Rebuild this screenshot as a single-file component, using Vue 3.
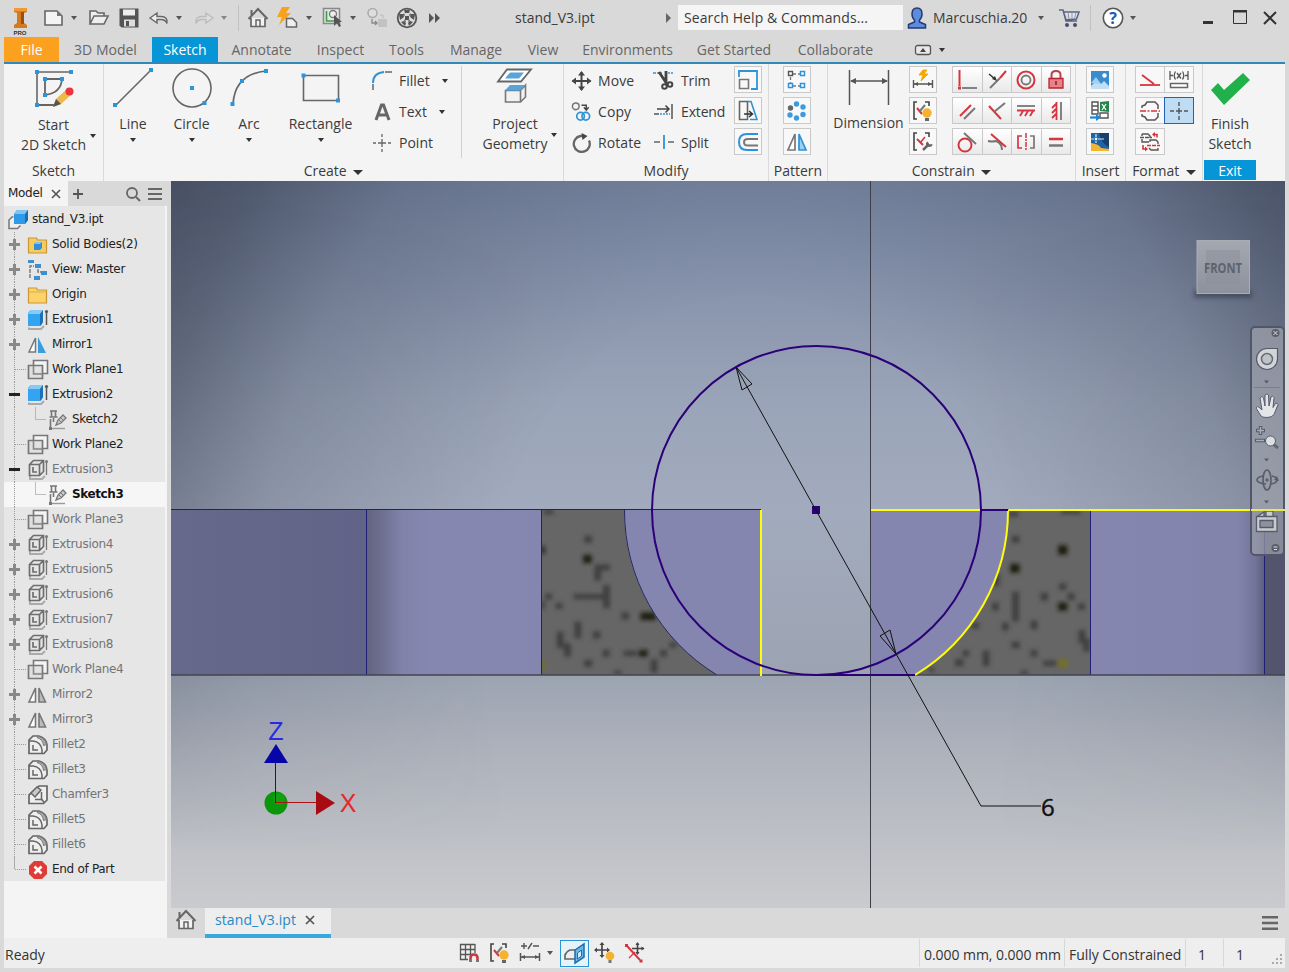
<script setup>
import { h } from 'vue'

const g = '#666'
const b = '#2f93d8'
const r = '#d6353f'
const cubeGrey = `<path d="M3 16v4h12l3-3" fill="none" stroke="#aaa" stroke-width="2"/><path d="M2.500 5.500l4-4h10v11l-4 4h-10z M2.500 5.500h10v11 M12.500 5.500l4-4 M6 8v5h4" fill="none" stroke="#6e6e6e" stroke-width="1.700"/><path d="M19.500 16V3" stroke="#777" stroke-width="1.300"/><circle cx="19.500" cy="2.500" r="1.500" fill="#777"/>`
const node = (x, y, c = b) => `<rect x="${x - 2}" y="${y - 2}" width="4" height="4" fill="${c}"/>`

const art = {
  logo: [26, 30, `<path d="M7 2h13v4l-3 1v10l3 2v3H7v-3l3-2V7L7 6z" fill="#d47a1f"/><path d="M7 2h13v3H7z" fill="#f09a35"/><path d="M14 6h3v12h-3z" fill="#9a4f10"/><text x="13" y="29" text-anchor="middle" font-family="Liberation Sans, sans-serif" font-weight="700" font-size="6" fill="#333">PRO</text>`],
  new: [22, 22, `<path d="M2 4h12l5 5v9H2z" fill="#f4f4f4" stroke="${g}" stroke-width="1.600"/><path d="M14 4v5h5z" fill="#777"/>`],
  open: [22, 22, `<path d="M2 17V4h6l2 2h6v3M2 17l4-8h14l-4 8z" fill="#eee" stroke="${g}" stroke-width="1.600"/>`],
  save: [22, 22, `<path d="M1.500 1.500h19v19h-17l-2-2z" fill="#555"/><path d="M5 2.500h12v6H5z" fill="#eee"/><path d="M6 12.500h11v7H6z" fill="#ddd"/><path d="M8 14h3v5H8z" fill="#555"/>`],
  undo: [22, 22, `<path d="M2 11l7-5v3.500h4q7 0 6 7q-1.500-4-6-4H9V16z" fill="#eee" stroke="${g}" stroke-width="1.400"/>`],
  redo: [22, 22, `<path d="M20 11l-7-5v3.500H9q-7 0-6 7q1.500-4 6-4h4V16z" fill="#ddd" stroke="#bbb" stroke-width="1.400"/>`],
  home: [22, 22, `<path d="M4 11v8.500h14V11" fill="#f2f2f2" stroke="${g}" stroke-width="1.700"/><path d="M1.500 12L11 2l9.500 10M4.500 8V3" fill="none" stroke="${g}" stroke-width="2"/><path d="M9 19v-6h4v6" fill="none" stroke="${g}" stroke-width="1.500"/>`],
  bolt: [22, 22, `<path d="M6 0h8l-4 6h5L3 18l3-8H1z" fill="#f9a11b"/><path d="M10.500 11.500h6l4 4V20h-10z" fill="#eee" stroke="${g}" stroke-width="1.500"/>`],
  select: [22, 22, `<path d="M1.500 1.500h16v15h-16z" fill="#dfe9df" stroke="#888" stroke-width="1.500"/><path d="M4.500 4v10h9" fill="none" stroke="#3c9b4d" stroke-width="1.600"/><circle cx="11" cy="7" r="3.500" fill="#eee" stroke="#777" stroke-width="1.300"/><path d="M12 8v11l3-3 2 4 2-1-2-4h3z" fill="#555"/>`],
  ghost: [22, 22, `<circle cx="6.500" cy="6" r="4.500" fill="#ddd" stroke="#aaa" stroke-width="1.500"/><rect x="12" y="12" width="9" height="8" rx="1" fill="#c2c2c2"/><path d="M14 8h3v3" fill="none" stroke="#bbb"/><path d="M6 12v4h5M9 14l2 2-2 2" fill="none" stroke="#888" stroke-width="1.300"/>`],
  ball: [22, 22, `<circle cx="11" cy="11" r="9.500" fill="#dcdcdc"/><path d="M8 3h6l-1 3H9zM3 7l4 0 1 3-4 3zM19 7h-4l-1 3 4 3zM9 9h4v4H9zM5 15l3-1 2 2-1 3zM17 15l-3-1-2 2 1 3zM8 6l1 3-2-1zM14 6l-1 3 2-1zM8 14l1-2 1 3zM14 14l-1-2-1 3z" fill="#555"/><circle cx="11" cy="11" r="9.300" fill="none" stroke="#555" stroke-width="1.800"/>`],
  chev: [14, 12, `<path d="M1 1l5 5-5 5zM7 1l5 5-5 5z" fill="#555"/>`],
  tri: [6, 12, `<path d="M0 1l5 5-5 5z" fill="#666"/>`],
  user: [22, 22, `<path d="M11 1q5 0 5 6 0 4-2.500 6v2l6 2.500V21H2.500v-3.500l6-2.500v-2Q6 11 6 7q0-6 5-6z" fill="#5d8be0" stroke="#253a6e" stroke-width="1.500"/>`],
  cart: [24, 22, `<path d="M1 3h4l3 11h11M5.500 5H21l-2.500 7L8 13z" fill="#e4e6ee" stroke="#5b6280" stroke-width="1.500"/><path d="M10 5l1 7M14 5v7M18 5l-1.500 7" stroke="#8d93ab"/><circle cx="9" cy="18" r="2" fill="#444e70"/><circle cx="17" cy="18" r="2" fill="#444e70"/>`],
  help: [22, 22, `<circle cx="11" cy="11" r="9.700" fill="#fff" stroke="#555" stroke-width="1.600"/><text x="11" y="17" text-anchor="middle" font-family="Open Sans, sans-serif" font-weight="700" font-size="16" fill="#2456bd">?</text>`],
  min: [14, 20, `<path d="M2 13h10v3H2z" fill="#333"/>`],
  max: [16, 20, `<path d="M1.500 3.500h13v12h-13z" fill="none" stroke="#333"/><path d="M1 2h14v2.500H1z" fill="#333"/>`],
  close: [16, 20, `<path d="M2 4l12 12M14 4L2 16" stroke="#333" stroke-width="2"/>`],
  collapse: [18, 12, `<rect x="1.500" y="1.500" width="15" height="9" rx="2" fill="#e8e8e8" stroke="#555" stroke-width="1.300"/><path d="M6 8l3-4 3 4z" fill="#444"/>`],
  start: [42, 42, `<path d="M4 37V4h34" fill="none" stroke="${g}" stroke-width="1.600"/><path d="M4 37h18M12 27V11h17q-1 14-17 16" fill="none" stroke="${g}" stroke-width="1.800"/>${node(4, 4)}${node(38, 4)}${node(4, 37)}${node(12, 11)}${node(29, 11)}${node(12, 27)}<path d="M20 39l3-8 11-10 5 5-11 10z" fill="#edb948"/><path d="M20 39l3-8 5 5z" fill="#555"/><circle cx="36.500" cy="23.500" r="4" fill="#ee3340"/>`],
  line: [42, 42, `<path d="M4 38L38 4" stroke="${g}" stroke-width="1.600"/>${node(3, 38)}${node(39, 3)}`],
  circle: [42, 42, `<circle cx="21" cy="21" r="19" fill="none" stroke="${g}" stroke-width="1.600"/>${node(21, 21)}${node(33.5, 36)}`],
  arc: [42, 42, `<path d="M5 37Q7 7 38 4" fill="none" stroke="${g}" stroke-width="1.700"/>${node(4.5, 37)}${node(14, 14)}${node(38, 4)}`],
  rect: [42, 42, `<path d="M3.500 8.500h35v25h-35z" fill="none" stroke="${g}" stroke-width="1.600"/>${node(3.5, 8.5)}${node(38, 33.5)}`],
  fillet: [22, 22, `<path d="M2 20v-6" stroke="${g}" stroke-width="1.500"/><path d="M2 13Q2 3 13 2" fill="none" stroke="${b}" stroke-width="2"/><path d="M14 2h7" stroke="${g}" stroke-width="1.500"/>`],
  text: [22, 22, `<path d="M5 19L10.500 4h2L18 19M8 14h7" fill="none" stroke="${g}" stroke-width="3"/>`],
  point: [22, 22, `<path d="M2 11h3M7 11h8M17 11h3M11 2v3M11 7v8M11 17v3" stroke="${g}" stroke-width="1.300"/>`],
  project: [40, 40, `<path d="M12 3.500h24l-10 12H3z" fill="#fff" stroke="${g}" stroke-width="1.800"/><path d="M15 6.500h14l-5 6H10z" fill="#57a3dc"/><path d="M10.500 24.500h15V36h-15zM25.500 36l5-5V19l-5 5.500" fill="#f2f2f2" stroke="#777" stroke-width="1.600"/><path d="M10 24.500l5-5.500h15.500l-5 5.500z" fill="#57a3dc"/>`],
  move: [20, 20, `<path d="M10 1v18M1 10h18" stroke="#444" stroke-width="2"/><path d="M10 0l3.500 4.500h-7zM10 20l3.500-4.500h-7zM0 10l4.500-3.500v7zM20 10l-4.500-3.500v7z" fill="#444"/>`],
  copy: [22, 22, `<circle cx="5" cy="5" r="3.500" fill="none" stroke="#777" stroke-width="1.600"/><path d="M11 4h5v4M13.500 6l2.500 3 2.500-3" fill="none" stroke="#444" stroke-width="1.500"/><circle cx="10" cy="15.500" r="4" fill="none" stroke="${b}" stroke-width="1.800"/><circle cx="15.500" cy="15.500" r="4" fill="none" stroke="${b}" stroke-width="1.800"/>`],
  rotate: [20, 20, `<path d="M17.500 7.500A8 8 0 1 1 9 3h3" fill="none" stroke="#666" stroke-width="2.300"/><path d="M10 0l6 3-5 4z" fill="#444"/>`],
  trim: [22, 22, `<path d="M0 3h9" stroke="${b}" stroke-width="1.500" stroke-dasharray="3 1"/><path d="M15 3h6" stroke="${b}" stroke-width="1.500" stroke-dasharray="2 1"/><path d="M6 2l8 12M13 1v12" stroke="#444" stroke-width="2.800"/><circle cx="11.500" cy="16.500" r="2.300" fill="none" stroke="#444" stroke-width="2"/><circle cx="17" cy="14.500" r="2.300" fill="none" stroke="#444" stroke-width="2"/>`],
  extend: [22, 22, `<path d="M19 3v15" stroke="#555" stroke-width="1.500"/><path d="M4 8h12M12.500 4.500L16 8l-3.500 3.500" fill="none" stroke="#444" stroke-width="1.500"/><path d="M1 13h5" stroke="#555" stroke-width="1.500"/><path d="M7 13h10" stroke="${b}" stroke-width="1.500" stroke-dasharray="2 1"/>`],
  split: [22, 22, `<path d="M1 10h6M15 10h6" stroke="#666" stroke-width="1.500"/><path d="M11 3v14" stroke="${b}" stroke-width="1.800"/>`],
  scale: [24, 24, `<path d="M3 9V3h18v18h-6" fill="none" stroke="${b}" stroke-width="1.800"/><path d="M3.500 11.500h9v9h-9z" fill="none" stroke="#777" stroke-width="1.600"/>`],
  stretch: [24, 24, `<path d="M3.500 2.500h8v18h-8z" fill="none" stroke="${g}" stroke-width="1.600"/><path d="M12 2.500h3l6 18h-7" fill="none" stroke="${b}" stroke-width="1.600"/><path d="M8 15h8M13 12l3.500 3-3.500 3" fill="none" stroke="#333" stroke-width="1.500"/>`],
  offset: [24, 24, `<path d="M22 4H11q-8 0-8 8t8 8h11" fill="none" stroke="${b}" stroke-width="2"/><path d="M22 9H12q-4 0-4 3.200T12 15.500h10" fill="none" stroke="#777" stroke-width="2"/>`],
  patRect: [24, 24, `<path d="M8 6h8M8 18h8M5.500 9v6" stroke="#777" stroke-width="1.300" stroke-dasharray="3 2"/><path d="M3.500 3.500h4v4h-4z" fill="#fff" stroke="#555" stroke-width="1.400"/><path d="M15.500 3.500h4v4h-4zM3.500 15.500h4v4h-4zM15.500 15.500h4v4h-4z" fill="#fff" stroke="${b}" stroke-width="1.500"/>`],
  patCirc: [24, 24, `<circle cx="5.500" cy="9" r="2.700" fill="#666"/><g fill="#3d9ade"><circle cx="11.500" cy="5" r="2.700"/><circle cx="18" cy="8" r="2.700"/><circle cx="18" cy="15.500" r="2.700"/><circle cx="11.500" cy="19" r="2.700"/><circle cx="5" cy="16" r="2.700"/></g>`],
  mirror: [24, 24, `<path d="M10 4v16H3z" fill="#fff" stroke="#777" stroke-width="1.700"/><path d="M14 4v16h7z" fill="#9bd0f3" stroke="${b}" stroke-width="1.700"/>`],
  dim: [42, 38, `<path d="M1.500 2v35M40.500 2v35" stroke="#555" stroke-width="1.500"/><path d="M3 13h36" stroke="#555" stroke-width="1.300"/><path d="M2 13l6-3v6zM40 13l-6-3v6z" fill="#555"/>`],
  autodim: [24, 24, `<path d="M12 2l-4 5h4l-2 6 7-7h-4l3-4z" fill="#f5a800" stroke="#f5a800"/><path d="M2.500 12v8M21.500 12v8M3 16h18" fill="none" stroke="#555" stroke-width="1.400"/><path d="M3 16l4-2v4zM21 16l-4-2v4z" fill="#555"/>`],
  showcon: [24, 24, `<path d="M6 3H3v17h3M14 3h4v4" fill="none" stroke="#444" stroke-width="1.600"/><path d="M6 9l5 6" stroke="${r}" stroke-width="2"/><path d="M9 12l5-6" stroke="#777" stroke-width="2"/><circle cx="16" cy="14" r="4.700" fill="#f4b22f"/><path d="M14 19h4v3h-4z" fill="#666"/>`],
  setcon: [24, 24, `<path d="M6 3H3v17h3M14 3h4v4" fill="none" stroke="#444" stroke-width="1.600"/><path d="M6 9l6 6" stroke="${r}" stroke-width="2"/><path d="M9 13l5-6" stroke="${r}" stroke-width="1.500"/><path d="M12 20l6-6" stroke="#666" stroke-width="2.500"/><path d="M16.500 11.500l2 3 3-.500q0 3-3.500 3t-3-4z" fill="#666"/>`],
  coinc: [24, 24, `<path d="M4.500 2v16" stroke="${r}" stroke-width="2"/><path d="M7 20h15" stroke="#777" stroke-width="1.800"/><rect x="3" y="18.500" width="3" height="3" fill="${r}"/>`],
  collin: [24, 24, `<path d="M5 20L15 10" stroke="#777" stroke-width="2"/><path d="M15 10l6-7" stroke="${r}" stroke-width="2"/><path d="M4 6l6 5" stroke="#333" stroke-width="1.600"/><path d="M12 13l-2-5-3 3z" fill="#333"/>`],
  concen: [24, 24, `<circle cx="12" cy="12" r="8.500" fill="none" stroke="${r}" stroke-width="2"/><circle cx="12" cy="12" r="4.500" fill="none" stroke="#777" stroke-width="1.800"/>`],
  lock: [24, 24, `<path d="M7.500 11V7q0-4 4.500-4t4.500 4v4" fill="none" stroke="#b8434c" stroke-width="2"/><path d="M5 10.500h14V20H5z" fill="#ea8088" stroke="#b52632" stroke-width="1.300"/><path d="M12 13v4" stroke="#8f1d28" stroke-width="1.500"/>`],
  para: [24, 24, `<path d="M5 17L16 6" stroke="${r}" stroke-width="2"/><path d="M9 20L20 9" stroke="#777" stroke-width="2"/>`],
  perp: [24, 24, `<path d="M4 7l12 13" stroke="${r}" stroke-width="2"/><path d="M9 13L20 4" stroke="#777" stroke-width="2"/>`],
  horiz: [24, 24, `<path d="M3 7h18" stroke="#777" stroke-width="1.800"/><path d="M3 11.500h18M9 12l-3 5M14 12l-3 5M19 12l-3 5" stroke="${r}" stroke-width="1.800"/>`],
  vert: [24, 24, `<path d="M17 3v18" stroke="#777" stroke-width="1.800"/><path d="M12.500 3v18M12 5L8 9M12 10l-4 4M12 15l-4 4" stroke="${r}" stroke-width="1.800"/>`],
  tang: [24, 24, `<circle cx="10" cy="15" r="6.500" fill="none" stroke="${r}" stroke-width="2"/><path d="M9 3l12 11" stroke="#777" stroke-width="2"/>`],
  smooth: [24, 24, `<path d="M3 11q4 1 8 0 6 2 6 9" fill="none" stroke="#777" stroke-width="2"/><path d="M6 4l15 13" stroke="${r}" stroke-width="2"/>`],
  symm: [24, 24, `<path d="M8 6H4v12h4" fill="none" stroke="${r}" stroke-width="1.700"/><path d="M16 6h4v12h-4" fill="none" stroke="#777" stroke-width="1.700"/><path d="M12 3v18" stroke="${r}" stroke-width="1.500" stroke-dasharray="5 1 2 1"/>`],
  equal: [24, 24, `<path d="M5 9h14" stroke="${r}" stroke-width="2.500"/><path d="M5 15.500h14" stroke="#777" stroke-width="2.500"/>`],
  image: [24, 24, `<rect x="3" y="3" width="18" height="18" fill="#3b8ccc"/><path d="M3 18l6-6 4 4 3-3 5 5v3H3z" fill="#bfe0f4"/><path d="M3 15l5-6 5 7z" fill="#9fd0f0"/><circle cx="16.500" cy="7.500" r="2.200" fill="#fff"/>`],
  excel: [24, 24, `<path d="M4 3h6v12H4zM4 7h6M4 11h6M12 14h8v5h-8z" fill="#fff" stroke="#555" stroke-width="1.400"/><path d="M12 3l9-1v11l-9-1z" fill="#23864c"/><path d="M14 5l4 6M18 5l-4 6" stroke="#fff" stroke-width="1.300"/><path d="M2 18.500h8" stroke="#2385d0" stroke-width="2.200"/><path d="M8 15l5 3.500L8 22z" fill="#2385d0"/>`],
  acad: [24, 24, `<rect x="3" y="3" width="18" height="18" fill="#2063a5"/><path d="M11 3h10v14q-8-4-10-14z" fill="#17406f"/><path d="M3 13q8 1 10 5l8 1v2H3z" fill="#f2b530"/><path d="M8 4v9M3 9h13" stroke="#cfe4f4" stroke-width="1.200"/><rect x="6.500" y="7.500" width="3" height="3" fill="#fff" stroke="#3f7fb8"/>`],
  constr: [24, 24, `<path d="M2 17h20" stroke="${r}" stroke-width="1.800"/><path d="M4 7l12 9" stroke="${r}" stroke-width="1.800"/>`],
  driven: [26, 24, `<path d="M4 3v9M22 3v9M4 7.500h3M19 7.500h3M9.500 3.500q-2.500 4 0 8M16.500 3.500q2.500 4 0 8M11 5l4 5.500M15 5l-4 5.500" fill="none" stroke="#555" stroke-width="1.300"/><path d="M4.500 15.500h17v4h-17z" fill="#fff" stroke="#666" stroke-width="1.500"/>`],
  center: [24, 24, `<path d="M4 9V7l3-1 2-3h8l3 3v4M4 15v2l3 1 2 3h8l3-3v-4" fill="none" stroke="#555" stroke-width="1.500"/><path d="M2 12h20" stroke="${r}" stroke-width="1.600" stroke-dasharray="6 1.500 2 1.500"/>`],
  cpoint: [24, 24, `<path d="M3 12h4M9 12h6M17 12h4M12 3v4M12 9v6M12 17v4" stroke="#555" stroke-width="1.400"/>`],
  fmt: [24, 24, `<path d="M4 4h6l2 2v2M4 4v2M4 9v3h7M12 12v-2h6l2 2v2M20 18v2h-7l-2-2" fill="none" stroke="#555" stroke-width="1.400"/><path d="M2 7.500h12" stroke="#555" stroke-width="1.300" stroke-dasharray="4 1"/><path d="M9 15.500h13" stroke="${r}" stroke-width="1.300" stroke-dasharray="4 1"/><path d="M15 4.500h4v3M5 15v4h4" fill="none" stroke="${r}" stroke-width="1.600"/><path d="M14 4.500l3-2.500v5zM10 19l-3-2.500v5z" fill="${r}"/>`],
  check: [42, 36, `<path d="M2 19l7-7 6 7L34 2l7 7-26 25z" fill="#21b14b"/>`],
  glass: [16, 16, `<circle cx="7" cy="7" r="5" fill="none" stroke="#666" stroke-width="1.800"/><path d="M11 11l4 4" stroke="#666" stroke-width="2"/>`],
  burger: [16, 14, `<path d="M1 2h14M1 7h14M1 12h14" stroke="#666" stroke-width="2"/>`],
  x: [12, 12, `<path d="M2 2l8 8M10 2l-8 8" stroke="#555" stroke-width="1.700"/>`],
  plus: [12, 12, `<path d="M6 1v10M1 6h10" stroke="#555" stroke-width="1.800"/>`],
  part: [22, 22, `<path d="M6.500 8H5l-3 3v8.500h8.500l3-3" fill="#eee" stroke="#777" stroke-width="1.500"/><path d="M7 5l3-4h11v10l-3 4H7z" fill="#2f9be8"/><path d="M7 5l3-4h11l-3 4z" fill="#7fc4f4"/><path d="M18 5l3-4v10l-3 4z" fill="#1a6fb2"/>`],
  folder: [22, 22, `<path d="M1.500 4h8l1 2h9v13h-18z" fill="#fcd269" stroke="#c9973a" stroke-width="1.200"/><path d="M2 8h17" stroke="#e0ae4a"/>`],
  bodies: [22, 22, `<path d="M1.500 4h8l1 2h9v13h-18z" fill="#f7cb5c" stroke="#c9973a" stroke-width="1.200"/><path d="M7 10l2-2h6v6l-2 2H7z" fill="#2f8fd8"/><path d="M7 10l2-2h6l-2 2z" fill="#7fc4f4"/>`],
  view: [22, 22, `<path d="M3 19V7h4M11 10v3h4" fill="none" stroke="#777" stroke-width="1.400" stroke-dasharray="4 1"/><path d="M1 1h6v3H1zM8 5h6v4H8zM14 12h6v4h-6zM7 17h6v4H7z" fill="#3b8fd0"/>`],
  extr: [22, 22, `<path d="M2 18.500v1.500h12l3-3" fill="none" stroke="#aaa" stroke-width="2"/><path d="M1 4.500Q1 3 4 1h12v12q-1 3-3 4H1z" fill="#35a4f0"/><path d="M1 5l3-4h12l-3 4z" fill="#84cbf8"/><path d="M13 5l3-4v12l-3 4z" fill="#1b71b5"/><path d="M19.500 16V3" stroke="#555" stroke-width="1.500"/><circle cx="19.500" cy="2.500" r="1.600" fill="#555"/>`],
  extrg: [22, 22, cubeGrey],
  mir: [22, 22, `<path d="M8.500 4v14H2z" fill="#fff" stroke="#777" stroke-width="1.500"/><path d="M11 3v16h8z" fill="#3b9ce0"/>`],
  mirg: [22, 22, `<path d="M8.500 4v14H2z" fill="#fff" stroke="#777" stroke-width="1.600"/><path d="M12 4v14h6.500z" fill="#bbb" stroke="#777" stroke-width="1.600"/>`],
  plane: [22, 22, `<path d="M6.500 1.500h14v13h-14z" fill="#f4f4f4" stroke="#777" stroke-width="1.600"/><path d="M1.500 6.500h14v13h-14z" fill="#ddd" fill-opacity=".8" stroke="#777" stroke-width="1.700"/><path d="M6.500 7v8h9" fill="none" stroke="#888" stroke-width="1.500"/>`],
  sk: [20, 22, `<path d="M2 2h7M3.500 2v6M7.500 2v6M1.500 8h8M5.500 9v4M2.500 10v8" stroke="#777" stroke-width="1.600" fill="none"/><path d="M2 19.500h15" stroke="#999" stroke-width="1.400"/><rect x="1" y="18" width="3" height="3" fill="#777"/><path d="M8 16l2-5 5-5 3 3-5 5z" fill="#ccc" stroke="#777" stroke-width="1.300"/><path d="M11 11l2.500 2.500M13 9l2.500 2.500" stroke="#777"/>`],
  fil: [22, 22, `<path d="M2 19.500V6l4-4h6q7 2 8 9v5l-3 3.500z" fill="#eee" stroke="#666" stroke-width="1.700"/><path d="M2 7h4q8 1 9 9v3M6 11v5h5" fill="none" stroke="#666" stroke-width="1.500"/><path d="M10 3.500q6 2 6.500 8l3-1q-1-6-7.500-8z" fill="#aaa" stroke="#777"/>`],
  cham: [22, 22, `<path d="M2 19.500V11L12 2h8v14l-3.500 3.500z" fill="#eee" stroke="#666" stroke-width="1.700"/><path d="M4 9l6-6 4 3-6 7z" fill="#c9c9c9" stroke="#666" stroke-width="1.500"/><path d="M14.500 8v8.500M8 15.500h7l2 3" fill="none" stroke="#666" stroke-width="1.500"/>`],
  end: [22, 22, `<path d="M7 2h8l5 5v8l-5 5H7l-5-5V7z" fill="#df3b37"/><path d="M7.500 7.500l7 7M14.500 7.500l-7 7" stroke="#fff" stroke-width="2.600"/>`],
  grid: [24, 24, `<path d="M2 3.500h15M2 8.500h15M2 13.500h13M2 18.500h8M2.500 3v16M7.500 3v16M12.500 3v10M17 3v9" stroke="#555" stroke-width="1.300"/><path d="M12.500 20v-3q0-3.500 3.500-3.500t3.500 3.500v3" fill="none" stroke="#c33b45" stroke-width="2.600"/><path d="M11 20h3M18 20h3" stroke="#777" stroke-width="2"/>`],
  tol: [24, 24, `<path d="M3 5h6M6 2v6M10 8l4-6M15 5h6" stroke="#555" stroke-width="1.400"/><path d="M2.500 12v8M21.500 12v8M3 16h18" fill="none" stroke="#555" stroke-width="1.500"/><path d="M3 16l4-2v4zM21 16l-4-2v4z" fill="#555"/>`],
  slice: [24, 24, `<path d="M13 9H7q-3 1-5 5v4h10" fill="#eee" stroke="#666" stroke-width="1.700"/><path d="M12 9l9-6v13l-9 6z" fill="#6fb6e6" stroke="#1c6ca8" stroke-width="1.500"/><path d="M14.500 12l4-3v6l-4 3z" fill="#d7ecfa" stroke="#1c6ca8"/>`],
  moveb: [24, 24, `<path d="M8 2v14M1 9h14" stroke="#444" stroke-width="1.700"/><path d="M8 1l2.500 3h-5zM8 17l2.500-3h-5zM0 9l3-2.500v5zM16 9l-3-2.500v5z" fill="#444"/><circle cx="16" cy="15" r="4.300" fill="#f4b22f"/><path d="M14.500 19h3v3h-3z" fill="#777"/>`],
  relax: [24, 24, `<path d="M3 5l13 14" stroke="${r}" stroke-width="2"/><path d="M5 17l6-6" stroke="${r}" stroke-width="1.300"/><path d="M1 3h3v3H1zM15.500 18.500h3v3h-3z" fill="${r}"/><path d="M13.500 2v11M8 7.500h12" stroke="#444" stroke-width="1.600"/><path d="M13.500 1l2 3h-4zM20.500 7.500l-3-2v4zM13.500 14l2-3h-4z" fill="#444"/>`],
  grip: [14, 14, `<path d="M10 2h2v2h-2zM6 6h2v2H6zM10 6h2v2h-2zM2 10h2v2H2zM6 10h2v2H6zM10 10h2v2h-2z" fill="#aaa"/>`],
}

const Ico = ({ n }) => {
  const [w, ht, body] = art[n]
  return h('svg', { class: 'ico', width: w, height: ht, viewBox: `0 0 ${w} ${ht}`, innerHTML: body })
}
Ico.props = ['n']

const menus = ['3D Model', 'Sketch', 'Annotate', 'Inspect', 'Tools', 'Manage', 'View', 'Environments', 'Get Started', 'Collaborate']
const draws = [['line', 'Line'], ['circle', 'Circle'], ['arc', 'Arc'], ['rect', 'Rectangle']]
const constraints = ['coinc', 'collin', 'concen', 'lock', 'para', 'perp', 'horiz', 'vert', 'tang', 'smooth', 'symm', 'equal']

// label, icon, marker (+ closed, - open, c child, e end), state (1 suppressed, 2 active)
const tree = [
  ['Solid Bodies(2)', 'bodies', '+'], ['View: Master', 'view', '+'], ['Origin', 'folder', '+'],
  ['Extrusion1', 'extr', '+'], ['Mirror1', 'mir', '+'], ['Work Plane1', 'plane', ''],
  ['Extrusion2', 'extr', '-'], ['Sketch2', 'sk', 'c'], ['Work Plane2', 'plane', ''],
  ['Extrusion3', 'extrg', '-', 1], ['Sketch3', 'sk', 'c', 2], ['Work Plane3', 'plane', '', 1],
  ['Extrusion4', 'extrg', '+', 1], ['Extrusion5', 'extrg', '+', 1], ['Extrusion6', 'extrg', '+', 1],
  ['Extrusion7', 'extrg', '+', 1], ['Extrusion8', 'extrg', '+', 1], ['Work Plane4', 'plane', '', 1],
  ['Mirror2', 'mirg', '+', 1], ['Mirror3', 'mirg', '+', 1], ['Fillet2', 'fil', '', 1],
  ['Fillet3', 'fil', '', 1], ['Chamfer3', 'cham', '', 1], ['Fillet5', 'fil', '', 1],
  ['Fillet6', 'fil', '', 1], ['End of Part', 'end', 'e'],
]

// surface speckles: x, y, width, height, tone
const specks = [
  [178, 148, 20, 22, 0], [176, 207, 22, 24, 1], [215, 232, 40, 18, 0], [203, 255, 18, 34, 0], [185, 320, 90, 16, 0],
  [226, 320, 18, 70, 0], [60, 180, 10, 22, 1], [75, 320, 18, 18, 0], [102, 348, 18, 18, 0], [275, 378, 20, 22, 0],
  [335, 379, 40, 22, 1], [151, 420, 18, 50, 0], [105, 450, 18, 50, 0], [124, 480, 18, 40, 0], [200, 435, 20, 22, 0],
  [225, 490, 18, 22, 0], [288, 490, 36, 16, 0], [322, 490, 22, 20, 1], [375, 490, 18, 20, 0], [178, 520, 22, 20, 0],
  [350, 528, 18, 40, 0], [255, 548, 20, 12, 0], [60, 525, 10, 22, 2], [75, 66, 26, 14, 0], [60, 345, 10, 26, 0], [400, 465, 20, 16, 0],
  [1290, 72, 24, 16, 0], [1440, 66, 50, 12, 0], [1295, 148, 20, 22, 0], [1418, 180, 24, 28, 1], [1293, 235, 24, 26, 1],
  [1418, 290, 20, 20, 0], [1440, 320, 20, 20, 0], [1370, 320, 20, 24, 0], [1418, 350, 24, 24, 1], [1467, 350, 18, 20, 0],
  [1295, 350, 18, 90, 0], [1242, 350, 18, 24, 0], [1190, 407, 20, 18, 0], [1268, 410, 18, 24, 0], [1343, 405, 18, 26, 0],
  [1468, 440, 18, 40, 0], [1480, 465, 18, 40, 0], [1295, 465, 22, 20, 0], [1343, 490, 18, 20, 0], [1218, 505, 18, 46, 0],
  [1148, 518, 22, 22, 0], [1385, 520, 36, 16, 0], [1418, 520, 22, 22, 2], [1318, 548, 20, 12, 0], [1165, 490, 18, 18, 0], [1245, 270, 16, 36, 0], [1075, 540, 16, 12, 0],
]
const tones = ['#404040', '#1d1a0c', '#777215']
</script>

<template>
  <div class="app">
    <header class="title">
      <Ico n="logo" /><Ico n="new" /><i class="dd" /><Ico n="open" /><Ico n="save" /><Ico n="undo" /><i class="dd" /><Ico n="redo" /><i class="dd pale" />
      <i class="vsep" /><Ico n="home" /><Ico n="bolt" /><i class="dd" /><Ico n="select" /><i class="dd" /><Ico n="ghost" /><Ico n="ball" /><Ico n="chev" />
      <span class="doc">stand_V3.ipt</span><Ico n="tri" />
      <span class="search">Search Help &amp; Commands...</span>
      <Ico n="user" /><span class="name">Marcuschia.20</span><i class="dd" /><Ico n="cart" /><i class="vsep" /><Ico n="help" /><i class="dd" />
      <Ico n="min" /><Ico n="max" /><Ico n="close" />
    </header>
    <nav class="tabs">
      <span class="file">File</span>
      <span v-for="m in menus" :key="m">{{ m }}</span>
      <span class="coll"><Ico n="collapse" /><i class="dd dark" /></span>
    </nav>

    <section class="ribbon">
      <div class="grp g-sketch">
        <div class="body big"><Ico n="start" /><span>Start</span><span>2D Sketch</span><i class="dd dark start-dd" /></div>
        <footer>Sketch</footer>
      </div>
      <div class="grp g-create">
        <div class="body">
          <div v-for="d in draws" :key="d[0]" class="draw" :class="d[0]"><Ico :n="d[0]" /><span>{{ d[1] }}</span><i class="dd dark" /></div>
          <div class="col fil-col">
            <div class="cmd"><Ico n="fillet" /><span>Fillet</span><i class="dd dark" /></div>
            <div class="cmd"><Ico n="text" /><span>Text</span><i class="dd dark" /></div>
            <div class="cmd"><Ico n="point" /><span>Point</span></div>
          </div>
          <div class="big proj"><Ico n="project" /><span>Project</span><span>Geometry</span><i class="dd dark proj-dd" /></div>
        </div>
        <footer>Create <i class="dd lg" /></footer>
      </div>
      <div class="grp g-modify">
        <div class="body">
          <div class="col m1">
            <div class="cmd"><Ico n="move" /><span>Move</span></div>
            <div class="cmd"><Ico n="copy" /><span>Copy</span></div>
            <div class="cmd"><Ico n="rotate" /><span>Rotate</span></div>
          </div>
          <div class="col m2">
            <div class="cmd"><Ico n="trim" /><span>Trim</span></div>
            <div class="cmd"><Ico n="extend" /><span>Extend</span></div>
            <div class="cmd"><Ico n="split" /><span>Split</span></div>
          </div>
          <div class="btns"><b><Ico n="scale" /></b><b><Ico n="stretch" /></b><b><Ico n="offset" /></b></div>
        </div>
        <footer>Modify</footer>
      </div>
      <div class="grp g-pattern">
        <div class="body"><div class="btns"><b><Ico n="patRect" /></b><b><Ico n="patCirc" /></b><b><Ico n="mirror" /></b></div></div>
        <footer>Pattern</footer>
      </div>
      <div class="grp g-cons">
        <div class="body">
          <div class="dim"><Ico n="dim" /><span>Dimension</span></div>
          <div class="btns"><b><Ico n="autodim" /></b><b><Ico n="showcon" /></b><b><Ico n="setcon" /></b></div>
          <div class="btns four"><b v-for="c in constraints" :key="c"><Ico :n="c" /></b></div>
        </div>
        <footer>Constrain <i class="dd lg" /></footer>
      </div>
      <div class="grp g-insert">
        <div class="body"><div class="btns"><b><Ico n="image" /></b><b><Ico n="excel" /></b><b><Ico n="acad" /></b></div></div>
        <footer>Insert</footer>
      </div>
      <div class="grp g-format">
        <div class="body"><div class="btns two"><b><Ico n="constr" /></b><b><Ico n="driven" /></b><b><Ico n="center" /></b><b class="sel"><Ico n="cpoint" /></b><b><Ico n="fmt" /></b></div></div>
        <footer>Format <i class="dd lg" /></footer>
      </div>
      <div class="grp g-exit">
        <div class="body big"><Ico n="check" /><span>Finish</span><span>Sketch</span></div>
        <footer class="exit">Exit</footer>
      </div>
    </section>

    <main>
      <aside>
        <div class="phead"><span class="ptab">Model<Ico n="x" /></span><Ico n="plus" /><Ico n="glass" class="gl" /><Ico n="burger" /></div>
        <div class="tree">
          <div class="row root"><Ico n="part" /><span>stand_V3.ipt</span></div>
          <div v-for="t in tree" :key="t[0]" class="row" :class="{ child: t[2] === 'c', last: t[2] === 'e', off: t[3] === 1, cur: t[3] === 2 }">
            <i class="exp" :class="{ p: t[2] === '+', m: t[2] === '-' }" />
            <Ico :n="t[1]" /><span>{{ t[0] }}</span>
          </div>
        </div>
      </aside>

      <div class="work">
        <svg class="view" width="1114" height="727" viewBox="171 181 1114 727">
          <defs>
            <linearGradient id="sky" x1="0" y1="0" x2="0" y2="1">
              <stop offset="0" stop-color="#7886a2" /><stop offset=".14" stop-color="#8793ac" /><stop offset=".3" stop-color="#9aa4b8" /><stop offset=".45" stop-color="#a2abbd" />
              <stop offset=".68" stop-color="#9ca4b2" /><stop offset=".8" stop-color="#b0b4bd" /><stop offset="1" stop-color="#cacbce" />
            </linearGradient>
            <radialGradient id="vig" gradientUnits="userSpaceOnUse" cx="0" cy="0" r="1" gradientTransform="translate(750 640) scale(760 980)">
              <stop offset=".35" stop-color="#394154" stop-opacity="0" /><stop offset=".65" stop-color="#394154" stop-opacity=".3" /><stop offset=".8" stop-color="#363d4e" stop-opacity=".62" /><stop offset="1" stop-color="#343b4b" stop-opacity=".88" />
            </radialGradient>
            <linearGradient id="vfade" x1="0" y1="0" x2="0" y2="1">
              <stop offset="0" stop-color="#fff" /><stop offset=".3" stop-color="#ddd" /><stop offset=".5" stop-color="#aaa" /><stop offset=".7" stop-color="#555" /><stop offset=".92" stop-color="#000" />
            </linearGradient>
            <mask id="vm" maskUnits="userSpaceOnUse" x="171" y="181" width="1114" height="727"><rect x="171" y="181" width="1114" height="727" fill="url(#vfade)" /></mask>
            <linearGradient id="shL" x1="0" y1="0" x2="1" y2="0"><stop offset="0" stop-color="#62647f" /><stop offset=".08" stop-color="#6d6f90" /><stop offset=".2" stop-color="#8082aa" /><stop offset=".35" stop-color="#8587b0" /><stop offset="1" stop-color="#8486b0" /></linearGradient>
            <linearGradient id="shR" x1="0" y1="0" x2="1" y2="0"><stop offset="0" stop-color="#8486b0" /><stop offset=".84" stop-color="#8284ac" /><stop offset=".94" stop-color="#73759a" /><stop offset="1" stop-color="#5b5d7b" /></linearGradient>
            <linearGradient id="dark" x1="0" y1="0" x2="1" y2="0"><stop offset="0" stop-color="#66698b" /><stop offset="1" stop-color="#616388" /></linearGradient>
            <filter id="soft" x="-5%" y="-5%" width="110%" height="110%"><feGaussianBlur stdDeviation="6" /></filter>
            <filter id="soft2" x="-10%" y="-60%" width="120%" height="220%"><feGaussianBlur stdDeviation="2" /></filter>
            <clipPath id="rough"><path d="M542 510H720V674.500H542zM910 510H1090V674.500H910z" /></clipPath>
            <linearGradient id="cube" x1="0" y1="0" x2="0" y2="1"><stop offset="0" stop-color="#a4a8b1" /><stop offset="1" stop-color="#8d919c" /></linearGradient>
          </defs>
          <rect x="171" y="181" width="1114" height="727" fill="url(#sky)" />
          <rect x="171" y="181" width="1114" height="727" fill="url(#vig)" mask="url(#vm)" />

          <rect x="171" y="510" width="196" height="165" fill="url(#dark)" />
          <rect x="367" y="510" width="175" height="165" fill="url(#shL)" />
          <rect x="541" y="510" width="180" height="165" fill="#666" />
          <rect x="910" y="510" width="181" height="165" fill="#666" />
          <g clip-path="url(#rough)">
            <g transform="translate(520 490) scale(.3827 .3333)" filter="url(#soft)">
              <rect v-for="(s, i) in specks" :key="i" :x="s[0] - s[2] / 2" :y="s[1] - s[3] / 2" :width="s[2]" :height="s[3]" :fill="tones[s[4]]" />
            </g>
          </g>
          <path d="M761 510H624A192 192 0 0 0 717 675H761z" fill="#8486b0" />
          <path d="M870.500 510H1008A192 192 0 0 1 915 675H870.500z" fill="#8486b0" />
          <rect x="1091" y="510" width="174" height="165" fill="url(#shR)" />
          <rect x="1265" y="510" width="20" height="165" fill="#53556f" />
          <g fill="none" stroke="#1f1f78" stroke-width="1">
            <path d="M171 509.500H761M366.500 510V675M541.500 510V675M1090.500 510V675M1264.500 510V675" />
            <path d="M624.500 510A192 192 0 0 0 717 675" stroke="#26285a" />
          </g>
          <path d="M171 675H1285" stroke="#42444f" stroke-width="1.500" />
          <path d="M870.500 181V908" stroke="#3c3f48" stroke-width="1" />
          <g fill="none" stroke="#fdfd0c" stroke-width="2">
            <path d="M761 510V676M871 510H981M1009 510H1285M1008 510A192 192 0 0 1 915 675" />
          </g>
          <g fill="none" stroke="#2b0079" stroke-width="2">
            <circle cx="816.500" cy="510.500" r="164.500" /><path d="M981 510H1008M816 675H915" />
          </g>
          <rect x="812" y="506" width="8" height="8" fill="#2b0079" />
          <g fill="none" stroke="#111" stroke-width="1">
            <path d="M736 367L981 806H1041M736 367l6 23 10-6zM896 654l-6-24-10 6z" />
          </g>
          <text x="1041" y="815.500" class="dimv">6</text>

          <g>
            <circle cx="276" cy="803" r="11.500" fill="#0a970a" /><circle cx="279" cy="799" r="6" fill="#15a815" opacity=".6" />
            <path d="M275.500 803V762" stroke="#1010a0" /><path d="M276 744l12 19h-24z" fill="#0606a8" />
            <path d="M276 802.500H317" stroke="#b01018" /><path d="M316 791v24l19-12z" fill="#a80c12" />
            <text x="276" y="740" text-anchor="middle" class="ax z">Z</text><text x="348" y="812" text-anchor="middle" class="ax xx">X</text>
          </g>

          <path d="M1194 290h58v8h-58z" fill="#2f3644" opacity=".55" filter="url(#soft2)" />
          <rect x="1197" y="240.500" width="52.500" height="53" fill="url(#cube)" stroke="#a9adb6" />
          <rect x="1206" y="250" width="34" height="34" fill="#8b8f9a" opacity=".45" />
          <text x="1204" y="272.500" class="front" textLength="38" lengthAdjust="spacingAndGlyphs">FRONT</text>

          <g>
            <rect x="1251" y="327" width="33" height="228" rx="4" fill="#a0a4ae" fill-opacity=".68" stroke="#515766" stroke-width="2" />
            <g fill="#5a5f6b"><circle cx="1275.500" cy="333" r="4" /><circle cx="1275.500" cy="548" r="4" /></g>
            <path d="M1273.500 331l4 4M1277.500 331l-4 4M1273.500 547h4M1274 549.500h3" stroke="#ddd" />
            <path d="M1267 348.500h10.500v10.500a10.500 10.500 0 1 1-10.500-10.500z" fill="#d2d4d8" stroke="#555b68" stroke-width="1.200" /><circle cx="1267" cy="359" r="5.500" fill="#bfc2c8" stroke="#666c78" stroke-width="1.500" />
            <path d="M1264 380.500h5l-2.500 3zM1264 458.500h5l-2.500 3zM1264 500.500h5l-2.500 3z" fill="#555b68" />
            <path d="M1254 387.500h26" stroke="#7b808c" />
            <path d="M1261 416l-5-8q1-3 4 0l2 2-2-12q2-3 3.500 0l1.500 8v-11q2-2 3.500 0l.5 11 2-9q2-2 3 .500l-1 10 2.500-4q2-1 2.500 1l-4 10q-2 3-7 3t-6-1.500z" fill="#e4e5e8" stroke="#585d69" />
            <path d="M1260.500 426v9M1256 430.500h9M1255 440.500h10" stroke="#555b68" stroke-width="3.500" /><path d="M1260.500 427v7M1257 430.500h7M1256 440.500h8" stroke="#a9adb6" stroke-width="1.500" />
            <path d="M1273 444l5 4" stroke="#626773" stroke-width="3" /><circle cx="1270.500" cy="441" r="5" fill="#dcdee1" stroke="#585d69" />
            <g fill="none" stroke="#585e6b" stroke-width="1.700"><ellipse cx="1267" cy="480" rx="4" ry="10" /><path d="M1263 476q-6 1-6 4t9 4M1271 484q6-1 6-4t-5-4" /></g><path d="M1265 480h4M1267 478v4" stroke="#4d5360" /><path d="M1277 476l2 5-5-1z" fill="#585e6b" />
            <path d="M1256.500 516.500h20.500v15h-20.500zM1258 516l6-4v4M1266 516v-5h7v5" fill="#c9ccd1" stroke="#585d69" stroke-width="1.300" /><path d="M1260 520.500h13v7h-13z" fill="#8d92a0" stroke="#555b68" stroke-width="1.300" />
            <path d="M1251 510H1285" stroke="#e9ea52" stroke-width="2" />
          </g>
        </svg>
        <div class="dtabs"><Ico n="home" class="hm" /><span class="dtab">stand_V3.ipt<Ico n="x" /></span><Ico n="burger" class="bur" /></div>
      </div>
    </main>

    <div class="status">
      <span class="ready">Ready</span>
      <Ico n="grid" /><Ico n="showcon" /><Ico n="tol" /><i class="dd" /><span class="act"><Ico n="slice" /></span><Ico n="moveb" /><Ico n="relax" />
      <span class="cell pos">0.000 mm, 0.000 mm</span><span class="cell fc">Fully Constrained</span><span class="cell n1">1</span><span class="cell n2">1</span><Ico n="grip" class="grip" />
    </div>
  </div>
</template>

<style>
html, body { margin: 0; overflow: hidden; }
.ico { display: block; flex: none; }
</style>

<style scoped>
.app { width: 1289px; height: 972px; box-sizing: border-box; padding: 0 4px 4px; background: #d9d9d9; display: flex; flex-direction: column; font: 14px/20px "Open Sans", "Noto Sans", sans-serif; color: #3b3b3b; overflow: hidden; white-space: nowrap; }
i { font-style: normal; }
.dd { display: block; width: 0; height: 0; border: 3px solid transparent; border-top: 4px solid #555; border-bottom: 0; flex: none; }
.dd.pale { border-top-color: #888; }
.dd.dark { border-top-color: #333; }
.dd.lg { border-width: 5px 5px 0; border-top-color: #333; display: inline-block; margin-left: 3px; vertical-align: 1px; }
.title { height: 36px; display: grid; align-items: center; grid-template-columns: 39px 28px 17px 30px 30px 28px 17px 28px 17px 9px 29px 30px 16px 28px 16px 30px 32px 87px 151px 12px 228px 27px 105px 20px 32px 12px 28px 71px 31px 30px 20px; }
.title > :first-child { margin-left: 3px; margin-top: 6px; }
.vsep { width: 1px; height: 26px; background: #c2c2c2; }
.search { box-sizing: border-box; width: 225px; height: 25px; padding: 3px 6px 0; background: #f5f5f5; margin-top: -1px; letter-spacing: .1px; }
.tabs { height: 25px; margin-top: 1px; display: flex; align-items: stretch; color: #666; line-height: 26px; border-bottom: 2px solid #2f88b8; }
.tabs span { box-sizing: border-box; text-align: center; }
.tabs span:nth-child(1) { width: 55px; background: #fba01f; color: #fff; }
.tabs span:nth-child(2) { width: 93px; }
.tabs span:nth-child(3) { width: 66px; background: #0696d7; color: #fff; }
.tabs span:nth-child(4) { width: 87px; }
.tabs span:nth-child(5) { width: 71px; }
.tabs span:nth-child(6) { width: 61px; }
.tabs span:nth-child(7) { width: 78px; }
.tabs span:nth-child(8) { width: 56px; }
.tabs span:nth-child(9) { width: 113px; }
.tabs span:nth-child(10) { width: 100px; }
.tabs span:nth-child(11) { width: 103px; }
.tabs .coll { display: flex; align-items: center; gap: 7px; margin-left: 27px; }
.ribbon { height: 117px; background: #f4f4f4; display: flex; }
.grp { box-sizing: border-box; border-right: 1px solid #dadada; display: grid; grid-template-rows: 96px 21px; flex: none; }
.grp footer { text-align: center; line-height: 22px; }
.body { display: flex; }
.g-sketch { width: 100px; }
.g-create { width: 460px; }
.g-modify { width: 205px; }
.g-pattern { width: 59px; }
.g-cons { width: 248px; }
.g-insert { width: 50px; }
.g-format { width: 77px; }
.g-exit { width: 54px; border: 0; }
.big { flex-direction: column; align-items: center; display: flex; position: relative; }
.big > svg { margin-top: 4px; margin-bottom: 5px; }
.start-dd { position: absolute; left: 86px; top: 70px; }
.draw { display: flex; flex-direction: column; align-items: center; width: 58px; }
.draw.circle { width: 59px; }
.draw.arc { width: 56px; }
.draw.rect { width: 87px; }
.draw svg { margin: 3px 0 5px; }
.draw .dd { margin-top: 4px; }
.col { display: grid; grid-template-rows: repeat(3, 31px); padding-top: 1px; }
.fil-col { width: 90px; margin-left: 7px; }
.cmd { display: flex; align-items: center; }
.cmd svg { margin-right: 6px; }
.cmd .dd { margin-left: 12px; }
.proj { box-sizing: border-box; width: 102px; height: 92px; margin: 2px 0 0; padding-left: 5px; border-left: 1px solid #d0d0d0; }
.proj > svg { margin-top: 0; margin-bottom: 8px; }
.proj-dd { position: absolute; left: 89px; top: 67px; }
.m1 { padding-left: 7px; width: 82px; }
.m1 .cmd svg { width: 21px; margin-right: 6px; }
.m1 .cmd { letter-spacing: .1px; }
.m2 { width: 81px; }
.m2 .cmd { letter-spacing: -.15px; }
.btns { display: grid; grid-template-columns: 28px; grid-auto-rows: 27px; row-gap: 4px; padding-top: 2px; align-content: start; }
.btns b { box-sizing: border-box; border: 1px solid #c9c9c9; background: #f8f8f8; display: flex; align-items: center; justify-content: center; }
.four { grid-template-columns: repeat(4, 29.6px); margin-left: 15px; }
.four b { margin-right: -1px; background: linear-gradient(#fff, #e9e9e9); }
.g-pattern .btns { margin-left: 14px; }
.dim { width: 81px; display: flex; flex-direction: column; align-items: center; }
.dim svg { margin: 4px 0 7px; }
.g-insert .btns { margin-left: 10px; }
.two { grid-template-columns: 29px 30px; margin-left: 9px; }
.two b { width: 30px; }
.two .sel { background: #bfdcf5; border-color: #1f62b8; }
.g-exit .big > svg { margin-top: 7px; margin-bottom: 7px; }
.exit { background: #0696d7; color: #fff; margin: 0 1px 1px; }
.grp .exit { line-height: 21px; }
main { height: 757px; display: flex; }
aside { width: 163px; background: #f4f4f4; margin-right: 4px; font: 12px/25px "DejaVu Sans", sans-serif; letter-spacing: -.3px; color: #222; }
.phead { height: 25px; display: flex; align-items: center; background: #d9d9d9; }
.ptab { width: 64px; height: 25px; box-sizing: border-box; padding-left: 4px; display: flex; align-items: center; gap: 7px; background: #f4f4f4; margin-right: 4px; }
.gl { margin-left: 41px; margin-right: 6px; }
.tree { box-sizing: border-box; background: #e6e6e6; height: 675px; padding-top: 1px; margin-right: 2px; overflow: hidden; }
.row { height: 25px; display: flex; align-items: center; background-image: linear-gradient(#999 50%, transparent 50%); background-size: 1px 2px; background-repeat: repeat-y; background-position: 10px 0; }
.row.root { padding-left: 3px; gap: 3px; background: none; }
.row.last { background: linear-gradient(#aaa, #aaa) 10px 0 / 1px 12px no-repeat; }
.row svg { margin-right: 3px; }
.row.root svg { margin-right: 0; }
.row.child svg { margin-right: 4px; }
.exp { width: 19px; margin-left: 3px; margin-right: 1px; height: 11px; flex: none; background: linear-gradient(90deg, #999 50%, transparent 50%) 8px 5px / 2px 1px repeat-x; clip-path: inset(0 0 0 8px); }
.exp.p, .exp.m { clip-path: none; background: linear-gradient(#888, #888) 2px 4px / 11px 3px no-repeat, linear-gradient(#888, #888) 6px 0 / 3px 11px no-repeat; }
.exp.m { background: linear-gradient(#222, #222) 2px 4px / 11px 3px no-repeat; }
.child .exp { width: 14px; margin-left: 30px; margin-right: 0; height: 25px; clip-path: none; background: linear-gradient(#999, #999) 1px 0 / 1px 13px no-repeat, linear-gradient(#999, #999) 1px 12px / 11px 1px no-repeat; opacity: .6; }
.off { color: #747474; }
.cur { background-color: #f6f6f6; font-weight: 700; color: #111; letter-spacing: -.4px; }
.work { width: 1114px; }
.view { display: block; }
.dimv { font: 24px "Open Sans", sans-serif; fill: #111; stroke: #111; stroke-width: .4px; }
.ax { font: 25px "Liberation Sans", sans-serif; }
.z { fill: #2828e8; }
.xx { fill: #e82828; }
.front { font: 700 15px "Open Sans", sans-serif; fill: #5e636e; }
.dtabs { height: 30px; display: flex; align-items: center; padding-left: 4px; }
.dtab { height: 30px; box-sizing: border-box; width: 126px; margin-left: 8px; padding: 0 0 3px 10px; display: flex; align-items: center; gap: 8px; background: #eee; border-bottom: 4px solid #38a9dc; color: #2488c8; letter-spacing: .1px; }
.hm { margin-top: -6px; }
.bur { margin-left: auto; margin-right: 7px; transform: scale(1.15); }
.status { height: 30px; background: #eee; display: flex; align-items: center; color: #333; }
.ready { width: 453px; padding: 3px 0 0 1px; }
.status > svg { margin-right: 6px; }
.status .dd { margin-right: 7px; margin-left: -1px; }
.act { width: 29px; height: 27px; box-sizing: border-box; border: 1px solid #2a93d5; background: #e6f3fb; display: flex; align-items: center; justify-content: center; margin-right: 5px; }
.cell { box-sizing: border-box; height: 28px; line-height: 32px; border-left: 1px solid #d8d8d8; padding-left: 4px; letter-spacing: -.05px; }
.pos { margin-left: auto; width: 145px; }
.fc { width: 121px; }
.n1 { width: 38px; padding-left: 12px; }
.n2 { width: 47px; padding-left: 12px; }
.status > .grip { margin: 12px 1px 0 0; }
</style>
